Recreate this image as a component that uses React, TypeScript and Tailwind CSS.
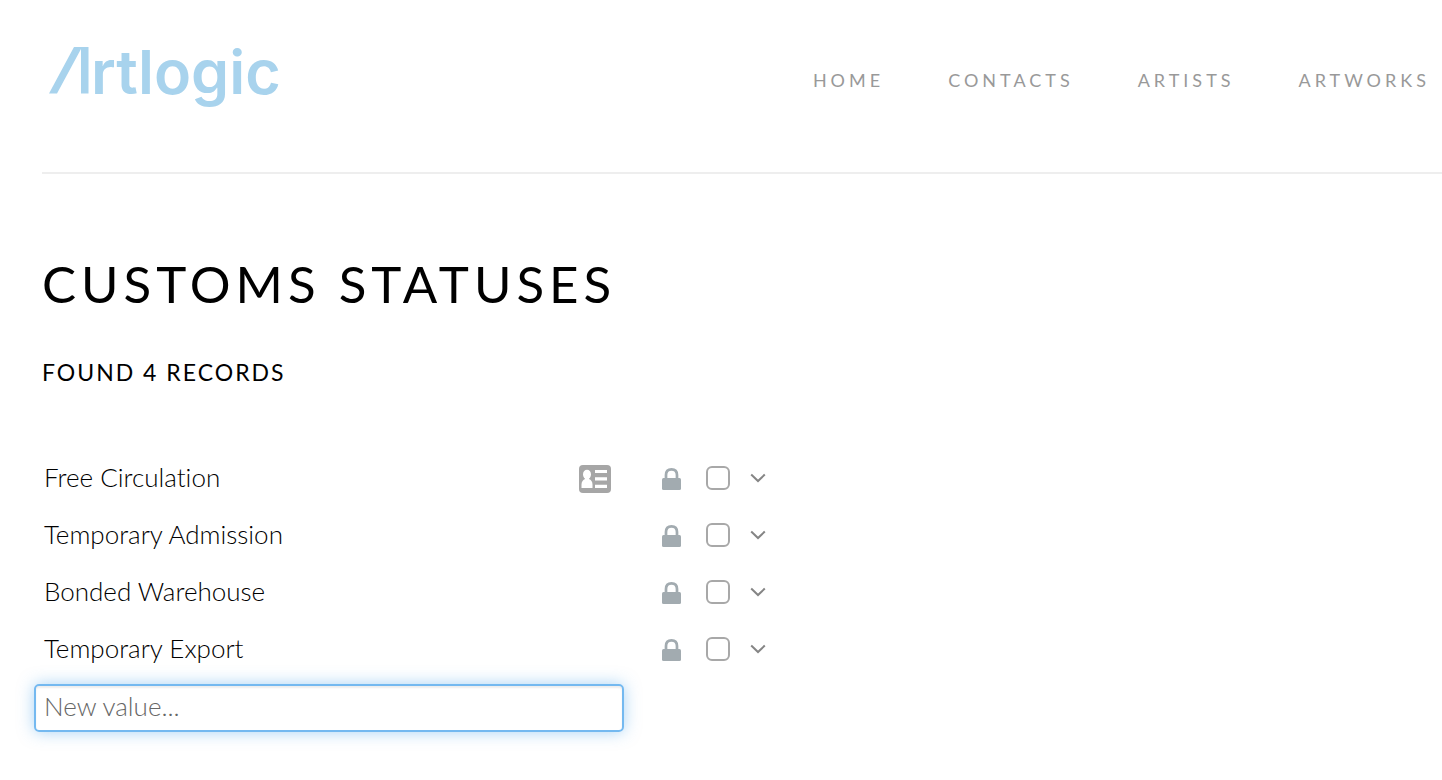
interface Status {
  id: number
  name: string
  hasCard?: boolean
}

const navItems = ["Home", "Contacts", "Artists", "Artworks"]

const statuses: Status[] = [
  { id: 1, name: "Free Circulation", hasCard: true },
  { id: 2, name: "Temporary Admission" },
  { id: 3, name: "Bonded Warehouse" },
  { id: 4, name: "Temporary Export" },
]

function Logo() {
  return (
    <a href="#" aria-label="Artlogic" className="flex items-baseline text-[#a8d3ed]">
      <svg width="40" height="47" viewBox="0 0 40 47" fill="currentColor" aria-hidden="true">
        <path d="M25 0H39.500V46.500H32V2L8 46.500H0Z" />
      </svg>
      <span className="pl-0.5 font-['Inter',sans-serif] text-[61px] leading-16 font-semibold">rtlogic</span>
    </a>
  )
}

function CardIcon() {
  return (
    <svg width="32" height="28" viewBox="0 0 32 28" aria-hidden="true">
      <rect width="32" height="28" rx="4" fill="#a6a6a6" />
      <ellipse cx="8" cy="9.500" rx="4" ry="4.800" fill="#fff" />
      <path d="M2.500 23V19.500C2.500 16.500 4.200 14.800 6 14L6 12H10V14C12 14.800 13.500 16.500 13.500 19.500V23Z" fill="#fff" />
      <path d="M16 5H28V8H16ZM16 12.300H28V15.500H16ZM16 19.700H28V23H16Z" fill="#fff" />
    </svg>
  )
}

function LockIcon() {
  return (
    <svg width="19" height="22" viewBox="0 0 19 22" role="img" aria-label="Locked">
      <path d="M4 11V7C4 3.500 6.200 1.400 9.500 1.400S15 3.500 15 7V11" fill="none" stroke="#a2abb0" strokeWidth="2.700" />
      <rect y="10" width="19" height="12" rx="1.500" fill="#a2abb0" />
    </svg>
  )
}

function ChevronIcon() {
  return (
    <svg width="16" height="10" viewBox="0 0 16 10" aria-hidden="true">
      <path d="M1.200 1.500L8 8L14.800 1.500" fill="none" stroke="#858585" strokeWidth="2" />
    </svg>
  )
}

export default function App() {
  return (
    <div className="min-h-screen overflow-x-hidden bg-white font-['Lato',sans-serif] text-black [font-variant-ligatures:none]">
      <header className="ml-[42px] flex h-[174px] items-start justify-between border-b-2 border-[#eeeeee] pt-10 pr-3 pl-[7px]">
        <Logo />
        <nav aria-label="Main" className="flex gap-16 pt-[26px]">
          {navItems.map((item) => (
            <a key={item} href="#" className="text-[18px] leading-7 tracking-[4px] text-[#999999] uppercase">
              {item}
            </a>
          ))}
        </nav>
      </header>

      <main className="pt-[78px] pb-12 pl-[34px]">
        <h1 className="pl-2 text-[51px] leading-16 tracking-[5px] uppercase">Customs Statuses</h1>
        <h2 className="mt-10 pl-2 text-[23px] leading-8 tracking-[2px] uppercase">Found 4 records</h2>

        <table className="mt-[61px] w-[732px] table-fixed text-left">
          <colgroup>
            <col className="w-[545px]" />
            <col className="w-[83px]" />
            <col className="w-[44px]" />
            <col className="w-[44px]" />
            <col className="w-4" />
          </colgroup>
          <tbody>
            {statuses.map((status) => (
              <tr key={status.id} className="h-[57px]">
                <td className="pb-0.5 pl-2.5 text-[26px] leading-8 font-light">{status.name}</td>
                <td className="pt-0.5">
                  {status.hasCard && (
                    <button type="button" aria-label={`View ${status.name}`} className="block">
                      <CardIcon />
                    </button>
                  )}
                </td>
                <td className="pt-0.5">
                  <LockIcon />
                </td>
                <td>
                  <input
                    type="checkbox"
                    aria-label={`Select ${status.name}`}
                    className="block size-6 appearance-none rounded-md border-2 border-[#a8a8a8] checked:bg-[#a8a8a8]"
                  />
                </td>
                <td>
                  <button type="button" aria-label={`Options for ${status.name}`} className="block">
                    <ChevronIcon />
                  </button>
                </td>
              </tr>
            ))}
          </tbody>
        </table>

        <input
          type="text"
          aria-label="New value"
          placeholder="New value..."
          className="mt-[7px] block h-12 w-[590px] rounded-[5px] border-2 border-[#74b9f0] px-2 pb-1 text-[26px] font-light shadow-[0_0_16px_rgba(82,168,236,0.5),inset_0_2px_2px_rgba(0,0,0,0.07)] outline-none placeholder:text-[#666666]"
        />
      </main>
    </div>
  )
}
